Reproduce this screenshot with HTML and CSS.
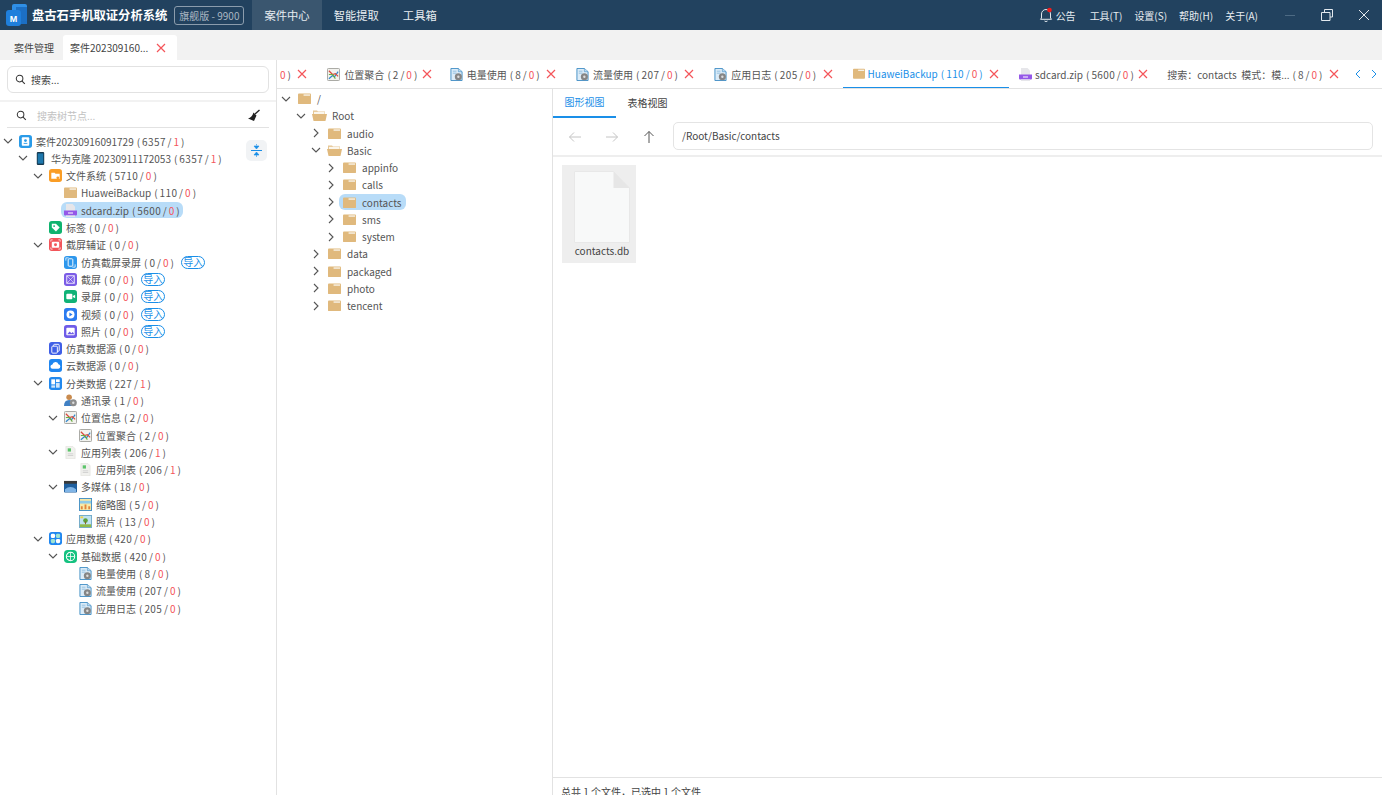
FILE: index.html
```html
<!DOCTYPE html>
<html lang="zh-CN">
<head>
  <meta charset="UTF-8">
  <title>盘古石手机取证分析系统</title>
  <link rel="stylesheet" href="styles.css">
</head>
<body>
  <!-- 图标定义 -->
  <svg class="defs" width="0" height="0">
    <symbol id="i-down" viewBox="0 0 12 12"><path d="M2 4l4 4 4-4" fill="none" stroke="#555" stroke-width="1.1"/></symbol>
    <symbol id="i-right" viewBox="0 0 12 12"><path d="M4 2l4 4-4 4" fill="none" stroke="#555" stroke-width="1.1"/></symbol>
    <symbol id="i-x" viewBox="0 0 10 10"><path d="M1 1l8 8M9 1l-8 8" fill="none" stroke="#f4555a" stroke-width="1.2"/></symbol>
    <symbol id="i-search" viewBox="0 0 12 12"><circle cx="5" cy="5" r="3.6" fill="none" stroke="#333" stroke-width="1.1"/><path d="M7.7 7.7l3 3" stroke="#333" stroke-width="1.2"/></symbol>
    <symbol id="i-folder" viewBox="0 0 14 12"><path d="M0 1.5Q0 .5 1 .5h12q1 0 1 1v9.5q0 1-1 1H1q-1 0-1-1z" fill="#e0b97d"/><path d="M6 1.5h7v1.6H6z" fill="#f6efe2"/></symbol>
    <symbol id="i-folder-open" viewBox="0 0 15 12"><path d="M1 1h4l1 1h7v3H1z" fill="#e6c796"/><path d="M2 2.4h10.5v3H2z" fill="#fbf6ec"/><path d="M0 4.4h15l-1.4 6.6q-.1.6-.8.6H2.2q-.7 0-.8-.6z" fill="#e0b97d"/></symbol>
    <symbol id="i-zip" viewBox="0 0 13 13"><path d="M2 0h6.500L11 2.500V8H2z" fill="#e6e6ea"/><path d="M0 6.500h13v4q0 1-1 1H1q-1 0-1-1z" fill="#9558e8"/><path d="M4 8.500h5v1H4z" fill="#fff"/><path d="M2 11.500h9V13H2z" fill="#e6e6ea"/></symbol>
    <symbol id="i-case" viewBox="0 0 14 14"><rect width="14" height="14" rx="3" fill="#2a9be8"/><rect x="3" y="2.500" width="8" height="9" rx="1" fill="#fff"/><circle cx="7" cy="6" r="1.500" fill="#2a9be8"/><path d="M5 8.500h4v1H5z" fill="#2a9be8"/></symbol>
    <symbol id="i-phone" viewBox="0 0 14 14"><rect x="3" width="8" height="14" rx="1.200" fill="#17384e"/><rect x="4" y="1.500" width="6" height="11" fill="#1e78ad"/></symbol>
    <symbol id="i-fs" viewBox="0 0 14 14"><rect width="14" height="14" rx="3" fill="#fa9d25"/><path d="M2.500 4h3.500l1 1h4.500v5.500h-9z" fill="#fff"/><circle cx="9.500" cy="9.500" r="1.500" fill="#fa9d25"/></symbol>
    <symbol id="i-tag" viewBox="0 0 14 14"><rect width="14" height="14" rx="3" fill="#0fb36e"/><path d="M3 3h4.500l4 4-4 4.200-4.500-4.200z" fill="#fff"/><circle cx="5.500" cy="5.500" r="1" fill="#0fb36e"/></symbol>
    <symbol id="i-shot" viewBox="0 0 14 14"><rect width="14" height="14" rx="3" fill="#f2555a"/><rect x="3" y="4" width="8" height="6.500" rx="1" fill="#fff"/><circle cx="7" cy="7.200" r="1.600" fill="#f2555a"/><path d="M2 4V2h2M10 2h2v2M12 10v2h-2M4 12H2v-2" fill="none" stroke="#fff" stroke-width=".7"/></symbol>
    <symbol id="i-sim" viewBox="0 0 14 14"><rect width="14" height="14" rx="3" fill="#2e97ec"/><rect x="4.500" y="3" width="5" height="8" rx="1" fill="none" stroke="#fff" stroke-width="1"/><path d="M2 5V2h3M9 12h3V9" fill="none" stroke="#fff" stroke-width=".8"/></symbol>
    <symbol id="i-pic" viewBox="0 0 14 14"><rect width="14" height="14" rx="3" fill="#7b5ce6"/><rect x="3" y="3" width="8" height="8" fill="none" stroke="#fff" stroke-width=".9"/><path d="M3 11l8-8M3 3l8 8" stroke="#fff" stroke-width=".6"/></symbol>
    <symbol id="i-rec" viewBox="0 0 14 14"><rect width="14" height="14" rx="3" fill="#10b277"/><rect x="2.500" y="4" width="6.500" height="6" rx="1" fill="#fff"/><path d="M9.500 6.500l2.500-1.500v4l-2.500-1.500z" fill="#fff"/></symbol>
    <symbol id="i-video" viewBox="0 0 14 14"><rect width="14" height="14" rx="3" fill="#2b7bf0"/><circle cx="7" cy="7" r="4.300" fill="#fff"/><path d="M5.800 4.800l3.400 2.200-3.400 2.200z" fill="#2b7bf0"/></symbol>
    <symbol id="i-photo" viewBox="0 0 14 14"><rect width="14" height="14" rx="3" fill="#6f5ce8"/><rect x="2.500" y="3" width="9" height="8" rx="1" fill="#fff"/><path d="M3.500 10l2.500-3 2 2 1.500-1.500 1.500 2.500z" fill="#6f5ce8"/></symbol>
    <symbol id="i-simdata" viewBox="0 0 14 14"><rect width="14" height="14" rx="3" fill="#3f5fe6"/><rect x="5" y="2.500" width="6" height="7.500" rx="1" fill="none" stroke="#fff"/><rect x="3" y="4.500" width="6" height="7.500" rx="1" fill="#3f5fe6" stroke="#fff"/></symbol>
    <symbol id="i-cloud" viewBox="0 0 14 14"><rect width="14" height="14" rx="3" fill="#1f86f0"/><path d="M4 10.500a2.300 2.300 0 0 1-.3-4.600 3.400 3.400 0 0 1 6.500-.3 2.500 2.500 0 0 1 0 4.900z" fill="#fff"/></symbol>
    <symbol id="i-cat" viewBox="0 0 14 14"><rect width="14" height="14" rx="3" fill="#2289ee"/><rect x="2.500" y="2.500" width="4" height="5.500" fill="#fff"/><rect x="7.500" y="2.500" width="4" height="3" fill="#fff"/><rect x="7.500" y="6.500" width="4" height="5" fill="#cfe6fb"/><rect x="2.500" y="9" width="4" height="2.500" fill="#cfe6fb"/></symbol>
    <symbol id="i-app" viewBox="0 0 14 14"><rect width="14" height="14" rx="3" fill="#1f86f0"/><rect x="2" y="2" width="4.500" height="4.500" rx="1.500" fill="#fff"/><rect x="7.500" y="2" width="4.500" height="4.500" rx="1.500" fill="#9fe3d2"/><rect x="2" y="7.500" width="4.500" height="4.500" rx="1.500" fill="#9fe3d2"/><rect x="7.500" y="7.500" width="4.500" height="4.500" rx="1.500" fill="#fff"/></symbol>
    <symbol id="i-base" viewBox="0 0 14 14"><rect width="14" height="14" rx="4" fill="#15c280"/><circle cx="7" cy="7" r="4.500" fill="none" stroke="#fff" stroke-width="1.100"/><path d="M7 2.500v9M3 7h8" stroke="#fff" stroke-width=".8"/></symbol>
    <symbol id="i-contact" viewBox="0 0 14 14"><circle cx="5.500" cy="3.500" r="3" fill="#c98b4e"/><path d="M0 13q0-6.500 5.500-6.500t5.500 6.500z" fill="#3f80c4"/><circle cx="10" cy="9.500" r="3.800" fill="#8d8d8d"/><circle cx="10" cy="9.500" r="1.300" fill="#ddd"/></symbol>
    <symbol id="i-map" viewBox="0 0 14 14"><rect x=".5" y=".5" width="13" height="13" rx="1" fill="#f2f2ee" stroke="#a0a09c"/><path d="M2 11.500l4-3.500 2 1.500L12 4" fill="none" stroke="#2f86cc" stroke-width="1.300"/><path d="M2 3l4 4 3-1 3 3" fill="none" stroke="#d84a3c" stroke-width="1.300"/><path d="M2 7h4l3 4.500" fill="none" stroke="#6cad40" stroke-width="1.300"/></symbol>
    <symbol id="i-list" viewBox="0 0 14 14"><path d="M2 .5h7.500L12 3v10.500H2z" fill="#f1f1ee" stroke="#dcdcd8" stroke-width=".6"/><path d="M4 2.500h3.500V6H4z" fill="#5cc46a"/><path d="M4 8h6v.8H4zM4 10h6v.8H4z" fill="#c9c9c9"/></symbol>
    <symbol id="i-media" viewBox="0 0 14 14"><rect y="3" width="14" height="10.500" rx="1" fill="#1f5f9e"/><rect y="1" width="14" height="3" fill="#3a3a3a"/><path d="M1 10q6-5 12 0v3H1z" fill="#7fb4e6"/></symbol>
    <symbol id="i-thumb" viewBox="0 0 14 14"><rect x=".5" y=".5" width="13" height="13" fill="#f7e9a8" stroke="#3f8cc4"/><path d="M1 3h12v3H1z" fill="#8fcbe8"/><path d="M2 12V9h2v3zM6 12V7h2v5zM10 12V9h2v3z" fill="#e2853c"/></symbol>
    <symbol id="i-image" viewBox="0 0 14 14"><rect x=".5" y=".5" width="13" height="13" fill="#bfe2f2" stroke="#6fa8c8"/><path d="M1 10h12v3H1z" fill="#8fbb4a"/><circle cx="7" cy="6" r="2.500" fill="#5ea23c"/><path d="M6.500 7h1v3h-1z" fill="#8a5a2b"/><rect x="1.500" y="1.500" width="3" height="2" fill="#f2d34a"/></symbol>
    <symbol id="i-log" viewBox="0 0 14 14"><path d="M1 .5h8l4 3.500v9.500H1z" fill="#dcecf8" stroke="#3f8cc4"/><path d="M9 .5V4h4" fill="#bcd9ee" stroke="#3f8cc4" stroke-width=".6"/><path d="M3 3h4v.8H3zM3 5h4v.8H3z" fill="#7fb2d8"/><circle cx="9" cy="9.500" r="3.800" fill="#858585"/><circle cx="9" cy="9.500" r="1.300" fill="#dcdcdc"/></symbol>
  </svg>

  <header class="titlebar">
    <svg class="logo" width="22" height="22" viewBox="0 0 22 22">
      <rect x="6" width="15" height="19" rx="2" fill="#2f8fe6"/>
      <rect x="10" y="3" width="11" height="17" fill="#1c6fc4"/>
      <rect y="6" width="15" height="16" rx="3" fill="#1f7fdc"/>
      <text x="7.500" y="18" class="logo-m">M</text>
    </svg>
    <span class="app-name">盘古石手机取证分析系统</span>
    <span class="edition">旗舰版 - 9900</span>
    <nav class="main-nav">
      <a class="nav-item active">案件中心</a>
      <a class="nav-item">智能提取</a>
      <a class="nav-item">工具箱</a>
    </nav>
    <div class="menu">
      <span class="notice">
        <svg class="bell" width="14" height="16" viewBox="0 0 14 16">
          <path d="M2.500 11V7a4.500 4.500 0 0 1 9 0v4l1 1.300h-11zM5.500 14q1.500 1.200 3 0" fill="none" stroke="#dfe6ec"/>
          <circle cx="10.500" cy="3" r="2.300" fill="#f01c1c"/>
        </svg>
        公告
      </span>
      <a>工具(T)</a>
      <a>设置(S)</a>
      <a>帮助(H)</a>
      <a>关于(A)</a>
    </div>
    <div class="win-btns">
      <svg width="12" height="12" viewBox="0 0 12 12"><path d="M1 6.500h10" stroke="#4d6a83"/></svg>
      <svg width="12" height="12" viewBox="0 0 12 12"><path d="M3.500 3V.5h8V8H9M.5 3.500h8.500V11.500H.5z" fill="none" stroke="#e3e9ee"/></svg>
      <svg width="12" height="12" viewBox="0 0 12 12"><path d="M1 1l10 10M11 1L1 11" stroke="#e3e9ee"/></svg>
    </div>
  </header>

  <div class="case-tabs">
    <span class="case-tab">案件管理</span>
    <span class="case-tab active">案件202309160... <svg class="tab-x" width="10" height="10"><use href="#i-x"/></svg></span>
  </div>

  <main class="workspace">
    <aside class="side">
      <div class="side-search">
        <div class="search-box"><svg width="11" height="11"><use href="#i-search"/></svg>搜索...</div>
      </div>
      <div class="tree-search">
        <svg width="11" height="11"><use href="#i-search"/></svg>
        <span class="placeholder">搜索树节点...</span>
        <svg class="broom" width="13" height="13" viewBox="0 0 13 13"><path d="M12.500 1L8 5" stroke="#222" stroke-width="1.400"/><path d="M6.500 3.500l3 3L7 12 1 9.500q4-1 5.500-6z" fill="#222"/></svg>
      </div>
      <button class="collapse-btn" type="button">
        <svg width="11" height="13" viewBox="0 0 11 13"><path d="M0 6.500h11" stroke="#1a8fe8"/><path d="M5.500 0v1.500M3 2l2.500 3L8 2zM3 11l2.500-3L8 11zM5.500 11v2" fill="#1a8fe8" stroke="#1a8fe8" stroke-width=".6"/></svg>
      </button>
      <ul class="tree">
        <li class="row lv0"><svg class="chev"><use href="#i-down"/></svg><span class="node"><svg class="ico"><use href="#i-case"/></svg>案件20230916091729 <span class="cnt">( 6357 / <b>1</b> )</span></span></li>
        <li class="row lv1"><svg class="chev"><use href="#i-down"/></svg><span class="node"><svg class="ico"><use href="#i-phone"/></svg>华为克隆 20230911172053 <span class="cnt">( 6357 / <b>1</b> )</span></span></li>
        <li class="row lv2"><svg class="chev"><use href="#i-down"/></svg><span class="node"><svg class="ico"><use href="#i-fs"/></svg>文件系统 <span class="cnt">( 5710 / <b>0</b> )</span></span></li>
        <li class="row lv3"><span class="chev"></span><span class="node"><svg class="ico"><use href="#i-folder"/></svg>HuaweiBackup <span class="cnt">( 110 / <b>0</b> )</span></span></li>
        <li class="row lv3"><span class="chev"></span><span class="node selected"><svg class="ico"><use href="#i-zip"/></svg>sdcard.zip <span class="cnt">( 5600 / <b>0</b> )</span></span></li>
        <li class="row lv2"><span class="chev"></span><span class="node"><svg class="ico"><use href="#i-tag"/></svg>标签 <span class="cnt">( 0 / <b>0</b> )</span></span></li>
        <li class="row lv2"><svg class="chev"><use href="#i-down"/></svg><span class="node"><svg class="ico"><use href="#i-shot"/></svg>截屏辅证 <span class="cnt">( 0 / <b>0</b> )</span></span></li>
        <li class="row lv3"><span class="chev"></span><span class="node"><svg class="ico"><use href="#i-sim"/></svg>仿真截屏录屏 <span class="cnt">( 0 / <b>0</b> )</span></span><span class="import">导入</span></li>
        <li class="row lv3"><span class="chev"></span><span class="node"><svg class="ico"><use href="#i-pic"/></svg>截屏 <span class="cnt">( 0 / <b>0</b> )</span></span><span class="import">导入</span></li>
        <li class="row lv3"><span class="chev"></span><span class="node"><svg class="ico"><use href="#i-rec"/></svg>录屏 <span class="cnt">( 0 / <b>0</b> )</span></span><span class="import">导入</span></li>
        <li class="row lv3"><span class="chev"></span><span class="node"><svg class="ico"><use href="#i-video"/></svg>视频 <span class="cnt">( 0 / <b>0</b> )</span></span><span class="import">导入</span></li>
        <li class="row lv3"><span class="chev"></span><span class="node"><svg class="ico"><use href="#i-photo"/></svg>照片 <span class="cnt">( 0 / <b>0</b> )</span></span><span class="import">导入</span></li>
        <li class="row lv2"><span class="chev"></span><span class="node"><svg class="ico"><use href="#i-simdata"/></svg>仿真数据源 <span class="cnt">( 0 / <b>0</b> )</span></span></li>
        <li class="row lv2"><span class="chev"></span><span class="node"><svg class="ico"><use href="#i-cloud"/></svg>云数据源 <span class="cnt">( 0 / <b>0</b> )</span></span></li>
        <li class="row lv2"><svg class="chev"><use href="#i-down"/></svg><span class="node"><svg class="ico"><use href="#i-cat"/></svg>分类数据 <span class="cnt">( 227 / <b>1</b> )</span></span></li>
        <li class="row lv3"><span class="chev"></span><span class="node"><svg class="ico"><use href="#i-contact"/></svg>通讯录 <span class="cnt">( 1 / <b>0</b> )</span></span></li>
        <li class="row lv3"><svg class="chev"><use href="#i-down"/></svg><span class="node"><svg class="ico"><use href="#i-map"/></svg>位置信息 <span class="cnt">( 2 / <b>0</b> )</span></span></li>
        <li class="row lv4"><span class="chev"></span><span class="node"><svg class="ico"><use href="#i-map"/></svg>位置聚合 <span class="cnt">( 2 / <b>0</b> )</span></span></li>
        <li class="row lv3"><svg class="chev"><use href="#i-down"/></svg><span class="node"><svg class="ico"><use href="#i-list"/></svg>应用列表 <span class="cnt">( 206 / <b>1</b> )</span></span></li>
        <li class="row lv4"><span class="chev"></span><span class="node"><svg class="ico"><use href="#i-list"/></svg>应用列表 <span class="cnt">( 206 / <b>1</b> )</span></span></li>
        <li class="row lv3"><svg class="chev"><use href="#i-down"/></svg><span class="node"><svg class="ico"><use href="#i-media"/></svg>多媒体 <span class="cnt">( 18 / <b>0</b> )</span></span></li>
        <li class="row lv4"><span class="chev"></span><span class="node"><svg class="ico"><use href="#i-thumb"/></svg>缩略图 <span class="cnt">( 5 / <b>0</b> )</span></span></li>
        <li class="row lv4"><span class="chev"></span><span class="node"><svg class="ico"><use href="#i-image"/></svg>照片 <span class="cnt">( 13 / <b>0</b> )</span></span></li>
        <li class="row lv2"><svg class="chev"><use href="#i-down"/></svg><span class="node"><svg class="ico"><use href="#i-app"/></svg>应用数据 <span class="cnt">( 420 / <b>0</b> )</span></span></li>
        <li class="row lv3"><svg class="chev"><use href="#i-down"/></svg><span class="node"><svg class="ico"><use href="#i-base"/></svg>基础数据 <span class="cnt">( 420 / <b>0</b> )</span></span></li>
        <li class="row lv4"><span class="chev"></span><span class="node"><svg class="ico"><use href="#i-log"/></svg>电量使用 <span class="cnt">( 8 / <b>0</b> )</span></span></li>
        <li class="row lv4"><span class="chev"></span><span class="node"><svg class="ico"><use href="#i-log"/></svg>流量使用 <span class="cnt">( 207 / <b>0</b> )</span></span></li>
        <li class="row lv4"><span class="chev"></span><span class="node"><svg class="ico"><use href="#i-log"/></svg>应用日志 <span class="cnt">( 205 / <b>0</b> )</span></span></li>
      </ul>
    </aside>

    <section class="content">
      <div class="doc-tabs">
        <div class="doc-strip">
          <span class="doc-tab cut"><span class="cnt"><b>0</b> )</span><svg class="tab-x" width="10" height="10"><use href="#i-x"/></svg></span>
          <span class="doc-tab slim"><svg class="ico"><use href="#i-map"/></svg>位置聚合 <span class="cnt">( 2 / <b>0</b> )</span><svg class="tab-x" width="10" height="10"><use href="#i-x"/></svg></span>
          <span class="doc-tab"><svg class="ico"><use href="#i-log"/></svg>电量使用 <span class="cnt">( 8 / <b>0</b> )</span><svg class="tab-x" width="10" height="10"><use href="#i-x"/></svg></span>
          <span class="doc-tab"><svg class="ico"><use href="#i-log"/></svg>流量使用 <span class="cnt">( 207 / <b>0</b> )</span><svg class="tab-x" width="10" height="10"><use href="#i-x"/></svg></span>
          <span class="doc-tab"><svg class="ico"><use href="#i-log"/></svg>应用日志 <span class="cnt">( 205 / <b>0</b> )</span><svg class="tab-x" width="10" height="10"><use href="#i-x"/></svg></span>
          <span class="doc-tab active"><svg class="ico"><use href="#i-folder"/></svg>HuaweiBackup <span class="cnt">( 110 / <b>0</b> )</span><svg class="tab-x" width="10" height="10"><use href="#i-x"/></svg></span>
          <span class="doc-tab zip"><svg class="ico"><use href="#i-zip"/></svg>sdcard.zip <span class="cnt">( 5600 / <b>0</b> )</span><svg class="tab-x" width="10" height="10"><use href="#i-x"/></svg></span>
          <span class="doc-tab">搜索：contacts&nbsp; 模式：模... <span class="cnt">( 8 / <b>0</b> )</span><svg class="tab-x" width="10" height="10"><use href="#i-x"/></svg></span>
        </div>
        <div class="doc-arrows">
          <svg width="8" height="10" viewBox="0 0 8 10"><path d="M6 1L2 5l4 4" fill="none" stroke="#1a8fe8"/></svg>
          <svg width="8" height="10" viewBox="0 0 8 10"><path d="M2 1l4 4-4 4" fill="none" stroke="#1a8fe8"/></svg>
        </div>
      </div>

      <div class="browser">
        <div class="dir-tree">
          <ul class="tree">
            <li class="row d0"><svg class="chev"><use href="#i-down"/></svg><span class="node"><svg class="ico"><use href="#i-folder"/></svg>/</span></li>
            <li class="row d1"><svg class="chev"><use href="#i-down"/></svg><span class="node"><svg class="ico open"><use href="#i-folder-open"/></svg>Root</span></li>
            <li class="row d2"><svg class="chev"><use href="#i-right"/></svg><span class="node"><svg class="ico"><use href="#i-folder"/></svg>audio</span></li>
            <li class="row d2"><svg class="chev"><use href="#i-down"/></svg><span class="node"><svg class="ico open"><use href="#i-folder-open"/></svg>Basic</span></li>
            <li class="row d3"><svg class="chev"><use href="#i-right"/></svg><span class="node"><svg class="ico"><use href="#i-folder"/></svg>appinfo</span></li>
            <li class="row d3"><svg class="chev"><use href="#i-right"/></svg><span class="node"><svg class="ico"><use href="#i-folder"/></svg>calls</span></li>
            <li class="row d3"><svg class="chev"><use href="#i-right"/></svg><span class="node selected"><svg class="ico"><use href="#i-folder"/></svg>contacts</span></li>
            <li class="row d3"><svg class="chev"><use href="#i-right"/></svg><span class="node"><svg class="ico"><use href="#i-folder"/></svg>sms</span></li>
            <li class="row d3"><svg class="chev"><use href="#i-right"/></svg><span class="node"><svg class="ico"><use href="#i-folder"/></svg>system</span></li>
            <li class="row d2"><svg class="chev"><use href="#i-right"/></svg><span class="node"><svg class="ico"><use href="#i-folder"/></svg>data</span></li>
            <li class="row d2"><svg class="chev"><use href="#i-right"/></svg><span class="node"><svg class="ico"><use href="#i-folder"/></svg>packaged</span></li>
            <li class="row d2"><svg class="chev"><use href="#i-right"/></svg><span class="node"><svg class="ico"><use href="#i-folder"/></svg>photo</span></li>
            <li class="row d2"><svg class="chev"><use href="#i-right"/></svg><span class="node"><svg class="ico"><use href="#i-folder"/></svg>tencent</span></li>
          </ul>
        </div>

        <div class="files">
          <div class="view-tabs">
            <span class="view-tab active">图形视图</span>
            <span class="view-tab">表格视图</span>
          </div>
          <div class="pathbar">
            <svg width="14" height="12" viewBox="0 0 14 12"><path d="M13 6H1.500M6 1.500L1.500 6 6 10.500" fill="none" stroke="#c4c4c4"/></svg>
            <svg width="14" height="12" viewBox="0 0 14 12"><path d="M1 6h11.500M8 1.500L12.500 6 8 10.500" fill="none" stroke="#c4c4c4"/></svg>
            <svg class="up" width="12" height="14" viewBox="0 0 12 14"><path d="M6 13V1.500M1.500 6L6 1.500 10.500 6" fill="none" stroke="#555"/></svg>
            <div class="path-input">/Root/Basic/contacts</div>
          </div>
          <div class="file-area">
            <div class="file-item">
              <svg width="56" height="72" viewBox="0 0 56 72">
                <path d="M.5.500h39L55.500 17v54.500H.5z" fill="#f8f9f9" stroke="#e8e8e8"/>
                <path d="M39.500.500V17h16z" fill="#e6e6e6"/>
              </svg>
              <span class="file-name">contacts.db</span>
            </div>
          </div>
          <div class="statusbar">总共 1 个文件，已选中 1 个文件</div>
        </div>
      </div>
    </section>
  </main>
</body>
</html>
```

FILE: styles.css
```css
/* 整体 */
* {
  box-sizing: border-box;
}
html, body {
  height: 100%;
}
body {
  margin: 0;
  display: flex;
  flex-direction: column;
  height: 100vh;
  overflow: hidden;
  font-family: "Noto Sans CJK SC", "Noto Sans", sans-serif;
  font-size: 10px;
  color: #555;
  background-color: #fff;
}
ul {
  list-style: none;
  margin: 0;
  padding: 0;
}
.defs {
  position: absolute;
}

/* 标题栏 */
.titlebar {
  flex: none;
  display: flex;
  align-items: center;
  height: 30px;
  padding-left: 6px;
  background-color: #22425f;
  color: #e8edf1;
}
.logo-m {
  font-family: "Liberation Sans", sans-serif;
  font-size: 9px;
  font-weight: bold;
  fill: #fff;
  text-anchor: middle;
}
.app-name {
  margin-left: 4px;
  font-size: 12.3px;
  font-weight: 700;
  color: #fff;
  white-space: nowrap;
}
.edition {
  margin-left: 7px;
  padding: 0 4px;
  height: 19px;
  line-height: 17px;
  border: 1px solid #8b9cac;
  border-radius: 3px;
  color: #a9b6c2;
  font-size: 10px;
  white-space: nowrap;
}
.main-nav {
  display: flex;
  margin-left: 8px;
  height: 100%;
}
.nav-item {
  display: flex;
  align-items: center;
  padding: 0 12px;
  font-size: 11.300px;
}
.nav-item.active {
  background-color: #3a566f;
}
.menu {
  display: flex;
  align-items: center;
  gap: 12px;
  margin-left: auto;
  color: #e8edf1;
}
.notice {
  display: flex;
  align-items: center;
  gap: 3px;
  margin-right: 2px;
}
.win-btns {
  display: flex;
  align-items: center;
  gap: 25px;
  margin-left: 26px;
  padding-right: 12px;
}

/* 案件页签 */
.case-tabs {
  flex: none;
  display: flex;
  align-items: flex-end;
  height: 30px;
  background-color: #f2f2f2;
}
.case-tab {
  display: flex;
  align-items: center;
  height: 25px;
  padding: 0 8px 0 14px;
  color: #444;
}
.case-tab.active {
  gap: 8px;
  margin-left: 1px;
  padding: 0 11px 0 7px;
  background-color: #fff;
  border-radius: 3px 3px 0 0;
}

.workspace {
  flex: 1;
  display: flex;
  min-height: 0;
}

/* 左侧树 */
.side {
  position: relative;
  flex: none;
  width: 277px;
  border-right: 1px solid #e2e2e2;
}
.side-search {
  height: 42px;
  padding: 6px 7px 0;
  border-bottom: 2px solid #f2f2f2;
}
.search-box {
  display: flex;
  align-items: center;
  gap: 5px;
  height: 27px;
  padding-left: 7px;
  border: 1px solid #e2e2e2;
  border-radius: 6px;
  color: #444;
}
.tree-search {
  display: flex;
  align-items: center;
  height: 26px;
  margin: 0 7px;
  padding: 2px 9px 0;
  border-bottom: 1px solid #e2e2e2;
}
.placeholder {
  margin-left: 10px;
  color: #c2c2c2;
}
.broom {
  margin-left: auto;
}
.collapse-btn {
  position: absolute;
  top: 80px;
  right: 9px;
  display: flex;
  align-items: center;
  justify-content: center;
  width: 21px;
  height: 21px;
  padding: 0;
  border: none;
  border-radius: 5px;
  background-color: #f1f3f5;
}
.side .tree {
  padding-top: 4.400px;
}
.row {
  display: flex;
  align-items: center;
  height: 17.300px;
  white-space: nowrap;
}
.lv0 { padding-left: 1px; }
.lv1 { padding-left: 16px; }
.lv2 { padding-left: 31px; }
.lv3 { padding-left: 46px; }
.lv4 { padding-left: 61px; }
.chev {
  flex: none;
  width: 14px;
  height: 12px;
  margin-right: 1px;
}
.node {
  display: flex;
  align-items: center;
  height: 16px;
  padding: 0 3px;
  border-radius: 6px;
}
.node.selected {
  background-color: #b8dcf8;
}
.ico {
  flex: none;
  width: 13px;
  height: 13px;
  margin-right: 4px;
}
.cnt {
  margin-left: 3px;
  letter-spacing: .4px;
  word-spacing: -1px;
}
.cnt b {
  font-weight: normal;
  color: #f4555a;
}
.import {
  flex: none;
  width: 24px;
  height: 13px;
  margin-left: 4px;
  line-height: 10.500px;
  text-align: center;
  border: 1.300px solid #1a8fe8;
  border-radius: 7px;
  color: #1a8fe8;
}

/* 右侧内容 */
.content {
  flex: 1;
  display: flex;
  flex-direction: column;
  min-width: 0;
}
.doc-tabs {
  flex: none;
  display: flex;
  justify-content: space-between;
  height: 29px;
  border-bottom: 1px solid #e2e2e2;
}
.doc-strip {
  display: flex;
  overflow: hidden;
}
.doc-tab {
  display: flex;
  flex: none;
  align-items: center;
  height: 29px;
  padding: 0 10px 1px;
  white-space: nowrap;
}
.doc-tab.cut {
  padding-left: 0;
}
.doc-tab.active {
  color: #1a8fe8;
  border-bottom: 2px solid #1a8fe8;
  padding-bottom: 0;
}
.tab-x {
  flex: none;
}
.doc-tab .tab-x {
  margin-left: 6px;
}
.doc-tab.slim {
  padding-right: 8px;
}
.doc-tab.slim .tab-x {
  margin-left: 4px;
}
.doc-tab.active .ico {
  width: 12px;
  margin-right: 3px;
}
.doc-tab.zip {
  padding-right: 9px;
}
.doc-tab.zip .ico {
  margin-right: 3px;
}
.doc-tab.zip .tab-x {
  margin-left: 4px;
}
.doc-arrows {
  display: flex;
  align-items: center;
  gap: 8px;
  padding: 0 4px 0 8px;
}
.browser {
  flex: 1;
  display: flex;
  min-height: 0;
}
.dir-tree {
  flex: none;
  width: 276px;
  padding-top: 1px;
  border-right: 1px solid #e2e2e2;
}
.dir-tree .row {
  height: 17.250px;
}
.d0 { padding-left: 2px; }
.d1 { padding-left: 17px; }
.d2 { padding-left: 32px; }
.d3 { padding-left: 47px; }
.dir-tree .node {
  padding: 0 4px;
}
.dir-tree .ico {
  margin-right: 6px;
}
.dir-tree .ico.open {
  width: 15px;
  margin-left: -1px;
  margin-right: 5px;
}
.files {
  flex: 1;
  display: flex;
  flex-direction: column;
  min-width: 0;
}
.view-tabs {
  flex: none;
  display: flex;
  height: 29px;
}
.view-tab {
  display: flex;
  align-items: center;
  width: 63px;
  height: 29px;
  padding-bottom: 2px;
  justify-content: center;
  color: #444;
}
.view-tab.active {
  color: #1a8fe8;
  border-bottom: 2px solid #1a8fe8;
}
.pathbar {
  flex: none;
  display: flex;
  align-items: center;
  gap: 23px;
  height: 39px;
  padding: 0 9px 0 15px;
  border-bottom: 2px solid #eee;
}
.up {
  margin-left: 1px;
}
.path-input {
  flex: 1;
  display: flex;
  align-items: center;
  height: 28px;
  margin: 0 0 2px -5px;
  padding-left: 8px;
  border: 1px solid #e4e4e4;
  border-radius: 5px;
  color: #444;
}
.file-area {
  flex: 1;
  padding: 8px 9px;
}
.file-item {
  display: flex;
  flex-direction: column;
  align-items: center;
  width: 74px;
  height: 98px;
  padding: 6px 0 0 6px;
  background-color: #eee;
  color: #444;
}
.file-name {
  margin-top: 1px;
  line-height: 14px;
}
.statusbar {
  flex: none;
  height: 18px;
  padding: 7px 0 0 8px;
  border-top: 1px solid #e2e2e2;
  line-height: 14px;
  color: #444;
  overflow: hidden;
}
```
